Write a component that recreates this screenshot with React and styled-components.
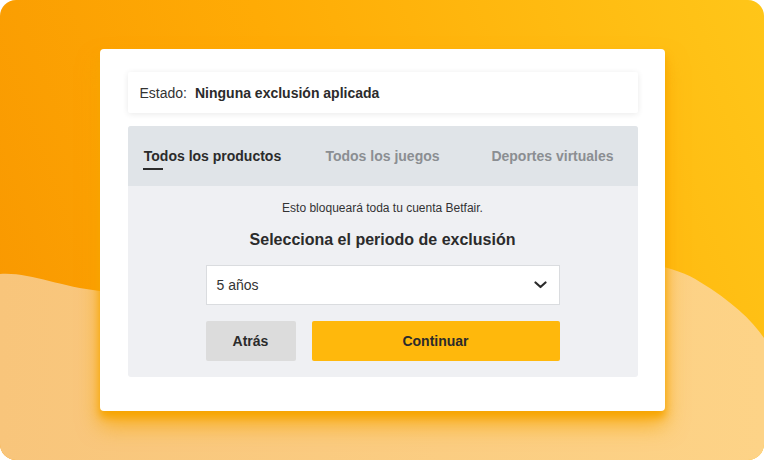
import React, { useState } from "react";
import styled, { createGlobalStyle } from "styled-components";

const GlobalStyle = createGlobalStyle`
  html, body {
    margin: 0;
    padding: 0;
    background: #ffffff;
  }
  body {
    font-family: "Liberation Sans", Arial, sans-serif;
    color: #333333;
  }
`;

// fondo
const Frame = styled.div`
  position: relative;
  width: 764px;
  height: 460px;
  border-radius: 16px;
  overflow: hidden;
  background: linear-gradient(70deg, #f89600 0%, #ffab05 45%, #ffc619 100%);
  display: flex;
  justify-content: center;
  align-items: flex-start;
`;

const Wave = styled.svg`
  position: absolute;
  left: 0;
  top: 0;
  width: 764px;
  height: 460px;
  z-index: 0;
`;

// tarjeta
const Card = styled.div`
  position: relative;
  z-index: 1;
  margin-top: 49px;
  width: 565px;
  box-sizing: border-box;
  padding: 23px 27px 34px 28px;
  background: #ffffff;
  border-radius: 4px;
  box-shadow: 0 6px 8px rgba(247, 165, 0, 1), 0 14px 22px rgba(247, 165, 0, 0.75);
  display: flex;
  flex-direction: column;
  gap: 13px;
`;

const StatusBox = styled.div`
  height: 41px;
  display: flex;
  align-items: center;
  padding: 0 12px;
  background: #ffffff;
  border-radius: 2px;
  box-shadow: 0 1px 6px rgba(0, 0, 0, 0.09);
  font-size: 14px;
`;

const StatusLabel = styled.span`
  color: #333333;
`;

const StatusValue = styled.span`
  margin-left: 8px;
  font-weight: 700;
  color: #2b2b2b;
`;

const Panel = styled.div`
  border-radius: 3px;
  overflow: hidden;
  background: #eff0f3;
`;

const TabBar = styled.div`
  height: 60px;
  display: grid;
  grid-template-columns: repeat(3, 1fr);
  background: #e0e4e8;
`;

const Tab = styled.button`
  border: 0;
  background: transparent;
  padding: 0;
  font-family: inherit;
  font-size: 14px;
  font-weight: 700;
  color: ${(p) => (p.$active ? "#2b2b2b" : "#8b8e92")};
  cursor: pointer;
  display: flex;
  align-items: center;
  justify-content: center;
`;

const TabLabel = styled.span`
  position: relative;
  &::after {
    content: "";
    display: ${(p) => (p.$active ? "block" : "none")};
    position: absolute;
    left: -1px;
    bottom: -6px;
    width: 20px;
    height: 2px;
    background: #2b2b2b;
  }
`;

const Body = styled.div`
  padding: 14px 78px 16px;
  display: flex;
  flex-direction: column;
  align-items: stretch;
`;

const Note = styled.p`
  margin: 0;
  font-size: 12px;
  line-height: 16px;
  text-align: center;
  color: #333333;
`;

const Heading = styled.h2`
  margin: 14px 0 0;
  font-size: 16px;
  line-height: 20px;
  font-weight: 700;
  text-align: center;
  color: #2b2b2b;
`;

const Select = styled.div`
  margin-top: 15px;
  height: 40px;
  box-sizing: border-box;
  border: 1px solid #dadcdf;
  background: #ffffff;
  display: flex;
  align-items: center;
  justify-content: space-between;
  padding: 0 12px 0 10px;
  font-size: 14px;
  color: #333333;
`;

const Actions = styled.div`
  margin-top: 16px;
  display: flex;
  gap: 16px;
`;

const Button = styled.button`
  height: 40px;
  border: 0;
  border-radius: 2px;
  font-family: inherit;
  font-size: 14px;
  font-weight: 700;
  color: #2b2b2b;
  cursor: pointer;
  background: ${(p) => (p.$primary ? "#ffb80c" : "#dcdcdc")};
  width: ${(p) => (p.$primary ? "auto" : "90px")};
  flex: ${(p) => (p.$primary ? 1 : "none")};
`;

const tabs = ["Todos los productos", "Todos los juegos", "Deportes virtuales"];

const Chevron = () => (
  <svg width="13" height="8" viewBox="0 0 13 8" fill="none">
    <path
      d="M1.5 1.5 L6.5 6 L11.5 1.5"
      stroke="#2b2b2b"
      strokeWidth="2.2"
      strokeLinecap="round"
      strokeLinejoin="round"
    />
  </svg>
);

export default function App() {
  const [active, setActive] = useState(0);

  return (
    <>
      <GlobalStyle />
      <Frame>
        <Wave viewBox="0 0 764 460">
          <defs>
            <linearGradient id="wave" x1="0" y1="0" x2="1" y2="0">
              <stop offset="0" stopColor="#f8c57b" />
              <stop offset="1" stopColor="#fdd387" />
            </linearGradient>
          </defs>
          <path
            d="M0 274 C30 272 60 287 100 291 L420 270 C560 250 660 255 700 282 C730 300 752 320 764 338 L764 460 L0 460 Z"
            fill="url(#wave)"
          />
        </Wave>
        <Card>
          <StatusBox>
            <StatusLabel>Estado:</StatusLabel>
            <StatusValue>Ninguna exclusión aplicada</StatusValue>
          </StatusBox>
          <Panel>
            <TabBar>
              {tabs.map((t, i) => (
                <Tab key={t} $active={i === active} onClick={() => setActive(i)}>
                  <TabLabel $active={i === active}>{t}</TabLabel>
                </Tab>
              ))}
            </TabBar>
            <Body>
              <Note>Esto bloqueará toda tu cuenta Betfair.</Note>
              <Heading>Selecciona el periodo de exclusión</Heading>
              <Select>
                <span>5 años</span>
                <Chevron />
              </Select>
              <Actions>
                <Button>Atrás</Button>
                <Button $primary>Continuar</Button>
              </Actions>
            </Body>
          </Panel>
        </Card>
      </Frame>
    </>
  );
}
